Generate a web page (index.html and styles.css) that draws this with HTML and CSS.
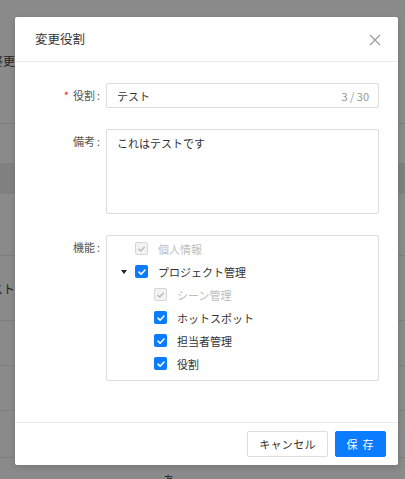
FILE: index.html
```html
<!DOCTYPE html>
<html lang="ja">
<head>
<meta charset="utf-8">
<link rel="stylesheet" href="styles.css">
</head>
<body>
<div class="page">
  <div class="bg-row bg-r1"><div class="bg-cell"><span>最終更</span></div></div>
  <div class="bg-row bg-r2"></div>
  <div class="bg-row bg-band"></div>
  <div class="bg-row bg-r3"></div>
  <div class="bg-row bg-r4"><div class="bg-cell"><span>テスト</span></div></div>
  <div class="bg-row bg-r5"></div>
  <div class="bg-row bg-r6"></div>
  <div class="bg-row bg-r7"></div>
  <div class="bg-row bg-r8"><div class="bg-foot">あ</div></div>
</div>

<div class="modal">
  <div class="modal-header">
    <div class="modal-title">変更役割</div>
    <svg class="close" width="12" height="12" viewBox="0 0 12 12"><path d="M1 1L11 11M11 1L1 11" stroke="#999" stroke-width="1.2" fill="none"/></svg>
  </div>
  <div class="modal-body">
    <div class="form-row">
      <div class="label"><span class="req">*</span>役割<span class="colon">:</span></div>
      <div class="input">
        <span class="input-text">テスト</span>
        <span class="count">3 / 30</span>
      </div>
    </div>
    <div class="form-row">
      <div class="label">備考<span class="colon">:</span></div>
      <div class="textarea">これはテストです</div>
    </div>
    <div class="form-row">
      <div class="label">機能<span class="colon">:</span></div>
      <div class="tree">
        <div class="node">
          <span class="switch"></span>
          <span class="cb cb-dis"><svg viewBox="0 0 12 12"><path d="M3 6.2L5.1 8.2L9 4" /></svg></span>
          <span class="txt dis">個人情報</span>
        </div>
        <div class="node">
          <span class="switch"><svg width="6" height="4" viewBox="0 0 6 4"><path d="M0 0H6L3 4Z" fill="#222"/></svg></span>
          <span class="cb cb-on"><svg viewBox="0 0 12 12"><path d="M3 6.2L5.1 8.2L9 4" /></svg></span>
          <span class="txt">プロジェクト管理</span>
        </div>
        <div class="node child">
          <span class="switch"></span>
          <span class="cb cb-dis"><svg viewBox="0 0 12 12"><path d="M3 6.2L5.1 8.2L9 4" /></svg></span>
          <span class="txt dis">シーン管理</span>
        </div>
        <div class="node child">
          <span class="switch"></span>
          <span class="cb cb-on"><svg viewBox="0 0 12 12"><path d="M3 6.2L5.1 8.2L9 4" /></svg></span>
          <span class="txt">ホットスポット</span>
        </div>
        <div class="node child">
          <span class="switch"></span>
          <span class="cb cb-on"><svg viewBox="0 0 12 12"><path d="M3 6.2L5.1 8.2L9 4" /></svg></span>
          <span class="txt">担当者管理</span>
        </div>
        <div class="node child">
          <span class="switch"></span>
          <span class="cb cb-on"><svg viewBox="0 0 12 12"><path d="M3 6.2L5.1 8.2L9 4" /></svg></span>
          <span class="txt">役割</span>
        </div>
      </div>
    </div>
  </div>
  <div class="modal-footer">
    <button class="btn">キャンセル</button>
    <button class="btn btn-primary">保存</button>
  </div>
</div>
</body>
</html>
```
FILE: styles.css
```css
* { box-sizing: border-box; }
html, body {
  margin: 0;
  padding: 0;
  width: 405px;
  height: 479px;
  overflow: hidden;
  background: #8a8a8a;
  font-family: "Noto Sans CJK JP", "Noto Sans", sans-serif;
}
.page {
  display: flex;
  flex-direction: column;
  width: 405px;
}
.bg-row {
  border-bottom: 1px solid #7f7f7f;
  display: flex;
  align-items: center;
}
.bg-r1 { height: 124px; align-items: flex-start; padding-top: 52px; }
.bg-r2 { height: 39px; border-bottom: none; }
.bg-band { height: 31px; background: #808080; border-bottom: none; }
.bg-r3 { height: 62px; }
.bg-r4 { height: 65px; }
.bg-r5 { height: 45px; }
.bg-r6 { height: 45px; }
.bg-r7 { height: 47px; }
.bg-r8 { height: 30px; border-bottom: none; align-items: flex-start; }
.bg-cell {
  width: 15px;
  display: flex;
  justify-content: flex-end;
  overflow: hidden;
  white-space: nowrap;
  font-size: 12px;
  color: #222;
}
.bg-foot {
  margin-left: 163px;
  margin-top: 13px;
  font-size: 12px;
  color: #222;
}

.modal {
  position: absolute;
  left: 15px;
  top: 17px;
  width: 383px;
  height: 448px;
  background: #fff;
  border-radius: 2px;
  box-shadow: 0 2px 6px rgba(0,0,0,0.15);
  display: flex;
  flex-direction: column;
}
.modal-header {
  height: 45px;
  border-bottom: 1px solid #ececec;
  display: flex;
  align-items: center;
  justify-content: space-between;
  padding: 0 17px 0 20px;
}
.modal-title {
  font-size: 12.5px;
  color: #333;
  line-height: 18px;
  margin-top: -1px;
}
.close { display: block; margin-top: 2px; }
.modal-body {
  flex: 1;
  padding: 21px 19px 0 0;
  display: flex;
  flex-direction: column;
  gap: 21px;
}
.form-row {
  display: flex;
  align-items: flex-start;
}
.label {
  width: 91px;
  padding-right: 6px;
  text-align: right;
  font-size: 11px;
  color: #555;
  line-height: 25px;
  flex-shrink: 0;
}
.colon { margin-left: 2px; }
.req {
  color: #f5222d;
  margin-right: 4px;
  font-size: 11px;
}
.input {
  flex: 1;
  height: 25px;
  border: 1px solid #dcdcdc;
  border-radius: 2px;
  display: flex;
  align-items: center;
  justify-content: space-between;
  padding: 0 9px 0 10px;
  font-size: 11px;
}
.input-text { color: #333; }
.count { color: #999; font-size: 11px; }
.textarea {
  flex: 1;
  height: 85px;
  border: 1px solid #dcdcdc;
  border-radius: 2px;
  padding: 4px 10px;
  font-size: 11px;
  color: #333;
  line-height: 18px;
}
.tree {
  flex: 1;
  height: 146px;
  border: 1px solid #dcdcdc;
  border-radius: 2px;
  padding: 1px 0 0 11px;
  display: flex;
  flex-direction: column;
}
.node {
  height: 23px;
  display: flex;
  align-items: center;
}
.node.child { padding-left: 19px; }
.switch {
  width: 12px;
  height: 12px;
  margin-right: 5px;
  display: flex;
  align-items: center;
  justify-content: center;
}
.switch svg { display: block; }
.cb {
  width: 13px;
  height: 13px;
  border-radius: 2px;
  display: flex;
  align-items: center;
  justify-content: center;
  margin-right: 10px;
}
.cb svg { width: 12px; height: 12px; display: block; fill: none; stroke-width: 1.6; stroke-linecap: round; stroke-linejoin: round; }
.cb-on { background: #0b7bff; }
.cb-on svg { stroke: #fff; }
.cb-dis { background: #f3f3f3; border: 1px solid #d6d6d6; }
.cb-dis svg { stroke: #bbb; }
.txt { font-size: 11px; color: #333; line-height: 18px; }
.txt.dis { color: #bdbdbd; }

.modal-footer {
  height: 43px;
  border-top: 1px solid #ececec;
  display: flex;
  align-items: center;
  justify-content: flex-end;
  gap: 7px;
  padding: 0 12px 0 0;
}
.btn {
  height: 26px;
  width: 81px;
  padding: 0;
  border: 1px solid #dcdcdc;
  background: #fff;
  border-radius: 2px;
  font-family: "Noto Sans CJK JP", "Noto Sans", sans-serif;
  font-size: 11px;
  color: #333;
  letter-spacing: 0.3px;
}
.btn-primary {
  width: 51px;
  background: #0b7bff;
  border-color: #0b7bff;
  color: #fff;
  letter-spacing: 5px;
  padding: 0 0 0 4px;
}
```
